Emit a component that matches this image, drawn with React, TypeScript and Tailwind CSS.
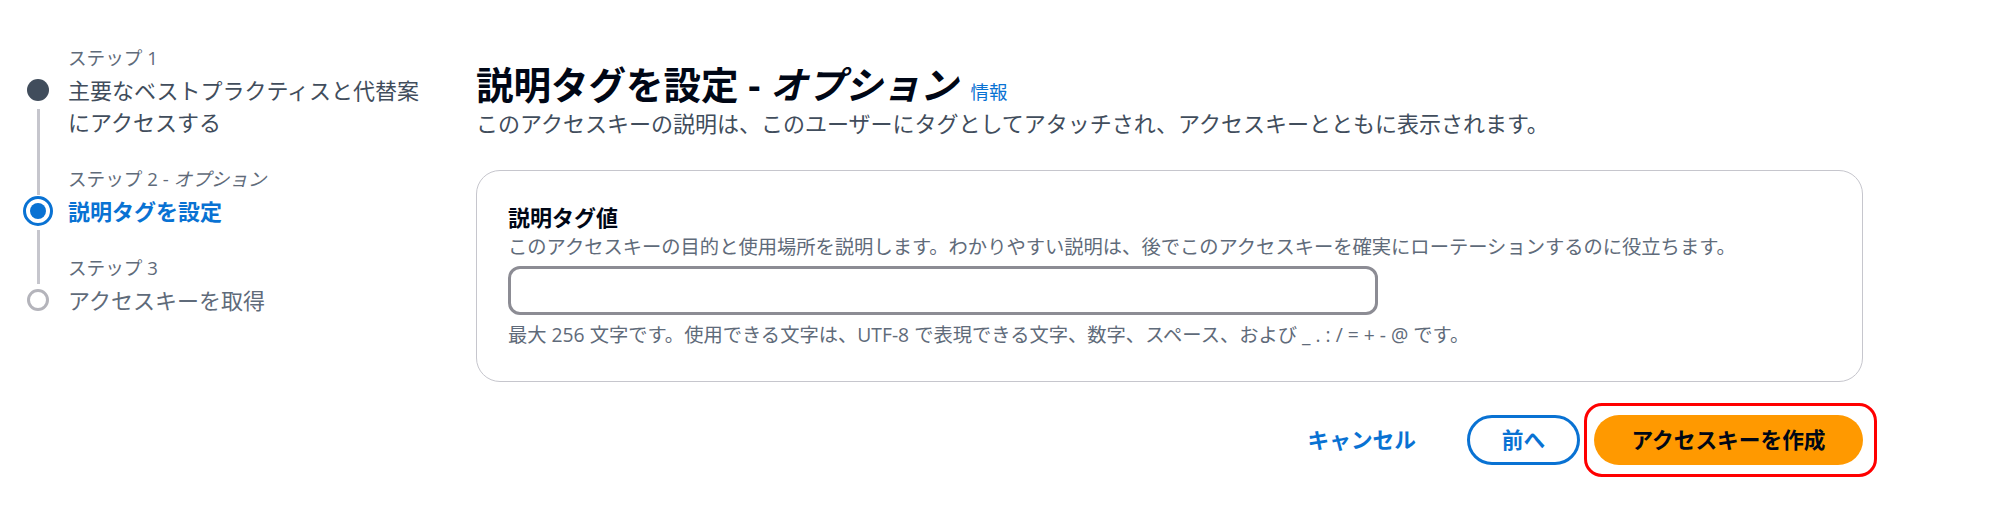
import type { ReactNode } from "react";

type StepState = "done" | "current" | "todo";

interface Step {
  label: ReactNode;
  title: string;
  state: StepState;
}

const STEPS: Step[] = [
  { label: "ステップ 1", title: "主要なベストプラクティスと代替案にアクセスする", state: "done" },
  {
    label: (
      <>
        ステップ 2 - <i>オプション</i>
      </>
    ),
    title: "説明タグを設定",
    state: "current",
  },
  { label: "ステップ 3", title: "アクセスキーを取得", state: "todo" },
];

function StepDot({ state }: { state: StepState }) {
  if (state === "done") {
    return <div className="w-[22px] h-[22px] rounded-full bg-[#414d5c]" />;
  }
  if (state === "current") {
    return (
      <div className="w-[30px] h-[30px] rounded-full border-[3.5px] border-[#0972d3] flex items-center justify-center">
        <div className="w-[16px] h-[16px] rounded-full bg-[#0972d3]" />
      </div>
    );
  }
  return <div className="w-[22px] h-[22px] rounded-full border-[3px] border-[#b4b4bb] bg-white" />;
}

function StepNav() {
  return (
    <nav className="w-[476px] shrink-0 pl-[23px] pt-[44px]">
      {STEPS.map((s, i) => {
        const first = i === 0;
        const last = i === STEPS.length - 1;
        return (
          <div key={i} className="flex">
            {/* dot column with connectors */}
            <div className="w-[30px] shrink-0 flex flex-col items-center">
              <div className="h-[30px] flex justify-center">
                {!first && <div className="w-[3px] h-full mb-[3px] bg-[#c6c6cd]" />}
              </div>
              <div className="h-[32px] flex items-center justify-center">
                <StepDot state={s.state} />
              </div>
              {!last && <div className="flex-1 w-[3px] mt-[3px] bg-[#c6c6cd]" />}
            </div>

            <div className={`pl-[15px] ${last ? "" : "pb-[27px]"}`}>
              <div className="text-[18.6px] leading-[28px] mb-[2px] text-[#5f6b7a]">{s.label}</div>
              <div
                className={`max-w-[362px] text-[22px] leading-[32px] ${
                  s.state === "current"
                    ? "font-bold text-[#0972d3]"
                    : s.state === "done"
                      ? "text-[#414d5c]"
                      : "text-[#5f6b7a]"
                }`}
              >
                {s.title}
              </div>
            </div>
          </div>
        );
      })}
    </nav>
  );
}

export default function App() {
  return (
    <div className="h-[506px] w-[2000px] bg-white flex font-['Open_Sans','Noto_Sans_CJK_JP',sans-serif] text-[#000716]">
      <StepNav />

      <main className="w-[1387px] pt-[62px]">
        {/* Page header */}
        <div className="flex items-baseline">
          <h1 className="text-[37.5px] leading-[46px] font-bold text-[#000716]">
            説明タグを設定 - <i>オプション</i>
          </h1>
          <a className="ml-[13px] text-[18.5px] text-[#0972d3] cursor-pointer">情報</a>
        </div>
        <p className="text-[22px] leading-[31px] text-[#414d5c]">
          このアクセスキーの説明は、このユーザーにタグとしてアタッチされ、アクセスキーとともに表示されます。
        </p>

        {/* Form container */}
        <div className="mt-[31px] rounded-[24px] border-[1.5px] border-[#c6c6cd] px-[31px] pt-[31px] pb-[32px]">
          <label className="block text-[22px] leading-[31px] font-bold text-[#000716]">説明タグ値</label>
          <div className="text-[19.3px] leading-[28px] text-[#5f6b7a]">
            このアクセスキーの目的と使用場所を説明します。わかりやすい説明は、後でこのアクセスキーを確実にローテーションするのに役立ちます。
          </div>
          <input
            type="text"
            className="mt-[5px] block w-[870px] h-[49px] rounded-[12px] border-[3px] border-[#8c8c94] bg-white px-[18px] text-[22px] outline-none"
          />
          <div className="mt-[6px] text-[19.3px] leading-[28px] text-[#5f6b7a]">
            最大 256 文字です。使用できる文字は、UTF-8 で表現できる文字、数字、スペース、および _ . : / = + - @ です。
          </div>
        </div>

        {/* Actions */}
        <div className="mt-[33px] flex justify-end items-center">
          <button
            type="button"
            className="h-[50px] px-[31px] text-[21.7px] font-bold text-[#0972d3] flex items-center"
          >
            キャンセル
          </button>
          <button
            type="button"
            className="ml-[20px] h-[50px] w-[113px] rounded-full border-[3px] border-[#0972d3] bg-white text-[21.7px] font-bold text-[#0972d3] flex items-center justify-center"
          >
            前へ
          </button>
          <div className="relative ml-[14px]">
            <button
              type="button"
              className="h-[50px] w-[269px] rounded-full bg-[#ff9900] text-[21.7px] font-bold text-[#000716] flex items-center justify-center"
            >
              アクセスキーを作成
            </button>
            <div className="absolute -left-[10px] -right-[14px] -top-[12px] -bottom-[12px] rounded-[18px] border-[3px] border-[#ff0000] pointer-events-none" />
          </div>
        </div>
      </main>
    </div>
  );
}
